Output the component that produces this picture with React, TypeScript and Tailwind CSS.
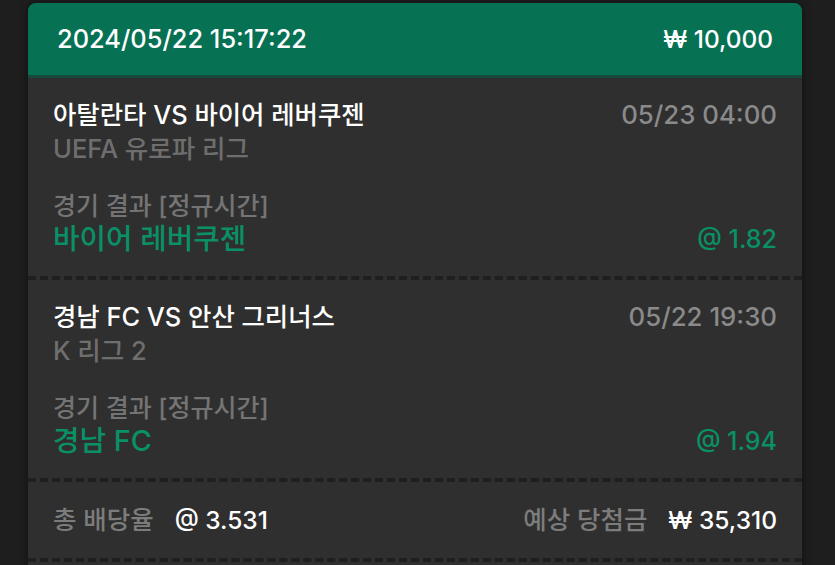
const FONT = { fontFamily: 'Inter, "Noto Sans CJK KR", sans-serif' };

interface Bet {
  title: string;
  league: string;
  time: string;
  market: string;
  pick: string;
  odds: string;
}

const bets: Bet[] = [
  {
    title: "아탈란타 VS 바이어 레버쿠젠",
    league: "UEFA 유로파 리그",
    time: "05/23 04:00",
    market: "경기 결과 [정규시간]",
    pick: "바이어 레버쿠젠",
    odds: "@ 1.82",
  },
  {
    title: "경남 FC VS 안산 그리너스",
    league: "K 리그 2",
    time: "05/22 19:30",
    market: "경기 결과 [정규시간]",
    pick: "경남 FC",
    odds: "@ 1.94",
  },
];

function BetRow({ bet }: { bet: Bet }) {
  return (
    <div className="border-b-4 border-dashed border-[#1f1f1f] px-[25px] pt-[20px] pb-[20px] font-medium">
      <div className="flex items-center justify-between">
        <span className="text-[25.4px] leading-[34px] text-white">{bet.title}</span>
        <span className="text-[25.8px] leading-[34px] text-[#8a8a8a]">{bet.time}</span>
      </div>
      <div className="text-[25.5px] leading-[34px] text-[#6e6e6e]">{bet.league}</div>
      <div className="mt-[24px] text-[25px] leading-[32px] text-[#747474]">{bet.market}</div>
      <div className="flex items-center justify-between">
        <span className="text-[28.8px] leading-[34px] text-[#0a9066]">{bet.pick}</span>
        <span className="text-[25px] leading-[34px] text-[#0a9066]">{bet.odds}</span>
      </div>
    </div>
  );
}

export default function App() {
  return (
    <div className="h-[565px] w-[835px] overflow-hidden bg-[#1e1e1e] pt-[3px]" style={FONT}>
      <div className="ml-[28px] w-[774px] overflow-hidden rounded-t-[8px] bg-[#2f2f2f] shadow-[0_0_8px_rgba(0,0,0,0.5)]">
        <div className="flex h-[75px] items-center justify-between border-b-[3px] border-[#174a3c] bg-[#077154] px-[29px] font-medium">
          <span className="text-[25.4px] text-white">2024/05/22 15:17:22</span>
          <span className="text-[24.4px] text-white">₩ 10,000</span>
        </div>

        {bets.map((bet) => (
          <BetRow key={bet.title} bet={bet} />
        ))}

        <div className="flex items-center justify-between border-b-4 border-dashed border-[#1f1f1f] px-[25px] py-[20px] font-medium">
          <div className="flex items-center gap-[21px] leading-[36px]">
            <span className="text-[25.5px] text-[#7c7c7c]">총 배당율</span>
            <span className="text-[24.5px] text-white">@ 3.531</span>
          </div>
          <div className="flex items-center gap-[21px] leading-[36px]">
            <span className="text-[25.5px] text-[#7c7c7c]">예상 당첨금</span>
            <span className="text-[24.5px] text-white">₩ 35,310</span>
          </div>
        </div>
        <div className="h-[40px]" />
      </div>
    </div>
  );
}
